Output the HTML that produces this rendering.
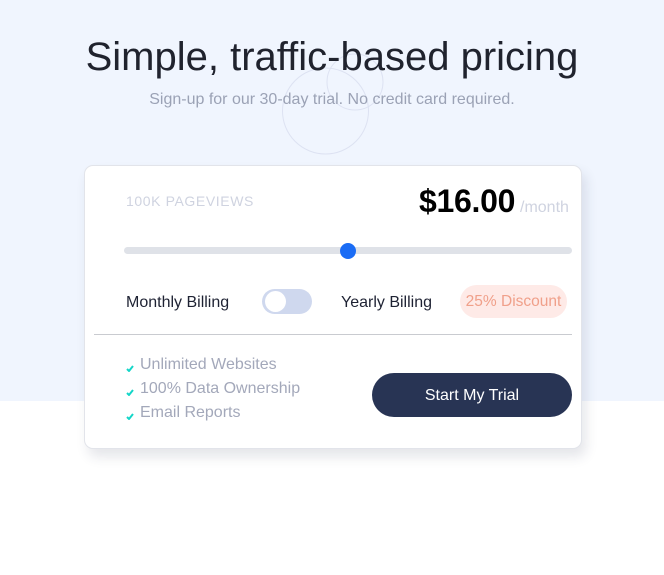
<!DOCTYPE html>
<html><head><meta charset="utf-8"><style>
*{margin:0;padding:0;box-sizing:border-box}
body{width:664px;height:575px;background:#fff;font-family:"Liberation Sans",sans-serif;position:relative;overflow:hidden}
.top{position:absolute;left:0;top:0;width:664px;height:401px;background:#f0f5fe}
.abs{position:absolute;white-space:nowrap}
h1{position:absolute;left:0;width:664px;text-align:center;top:35px;font-weight:normal;font-size:40px;color:#20232e}
.sub{left:0;width:664px;text-align:center;top:91px;font-size:16px;color:#9ba2b5}
.card{position:absolute;left:84px;top:165px;width:498px;height:284px;background:#fff;border:1px solid #e2e4ea;border-radius:9px;box-shadow:4px 8px 12px rgba(40,50,80,0.12)}
.feat{font-size:16px;color:#a3a8ba}
.chk{position:absolute;left:0;top:9px}
.feat span{margin-left:14px}
</style></head><body>
<div class="top"></div>
<svg class="abs" style="left:0;top:0" width="664" height="200">
<circle cx="325.5" cy="111" r="43" fill="none" stroke="#dde2f2" stroke-width="1"/>
<circle cx="355" cy="82" r="28" fill="none" stroke="#dde2f2" stroke-width="1"/>
</svg>
<h1>Simple, traffic-based pricing</h1>
<div class="abs sub">Sign-up for our 30-day trial. No credit card required.</div>
<div class="card"></div>
<div class="abs" style="left:126px;top:193px;font-size:14px;color:#cfd3e0;letter-spacing:0.6px">100K PAGEVIEWS</div>
<div class="abs" style="left:419px;top:183px;font-size:32px;font-weight:bold;color:#000;letter-spacing:-0.3px">$16.00</div>
<div class="abs" style="left:520px;top:199px;font-size:16px;color:#cfd3e0">/month</div>
<div class="abs" style="left:124px;top:247px;width:448px;height:7px;border-radius:4px;background:#dfe2e8"></div>
<div class="abs" style="left:340px;top:243px;width:16px;height:16px;border-radius:50%;background:#1a6cf5"></div>
<div class="abs" style="left:126px;top:294px;font-size:16px;color:#1e2233">Monthly Billing</div>
<div class="abs" style="left:262px;top:289px;width:50px;height:25px;border-radius:13px;background:#cfd8ee"></div>
<div class="abs" style="left:265px;top:291px;width:21px;height:21px;border-radius:50%;background:#fff"></div>
<div class="abs" style="left:341px;top:294px;font-size:16px;color:#1e2233">Yearly Billing</div>
<div class="abs" style="left:460px;top:285px;width:107px;height:33px;border-radius:17px;background:#feeae7;color:#f0a08a;font-size:15.5px;text-align:center;line-height:33px">25% Discount</div>
<div class="abs" style="left:94px;top:334px;width:478px;height:1px;background:#c9cbd0"></div>
<div class="abs feat" style="left:126px;top:356px"><svg class="chk" width="8" height="7" viewBox="0 0 8 7"><path d="M1 4 L3 6 L7 1" fill="none" stroke="#14d6c8" stroke-width="2"/></svg><span>Unlimited Websites</span></div>
<div class="abs feat" style="left:126px;top:380px"><svg class="chk" width="8" height="7" viewBox="0 0 8 7"><path d="M1 4 L3 6 L7 1" fill="none" stroke="#14d6c8" stroke-width="2"/></svg><span>100% Data Ownership</span></div>
<div class="abs feat" style="left:126px;top:404px"><svg class="chk" width="8" height="7" viewBox="0 0 8 7"><path d="M1 4 L3 6 L7 1" fill="none" stroke="#14d6c8" stroke-width="2"/></svg><span>Email Reports</span></div>
<div class="abs" style="left:372px;top:373px;width:200px;height:44px;border-radius:22px;background:#283454;color:#fff;font-size:16px;text-align:center;line-height:46px">Start My Trial</div>
</body></html>
